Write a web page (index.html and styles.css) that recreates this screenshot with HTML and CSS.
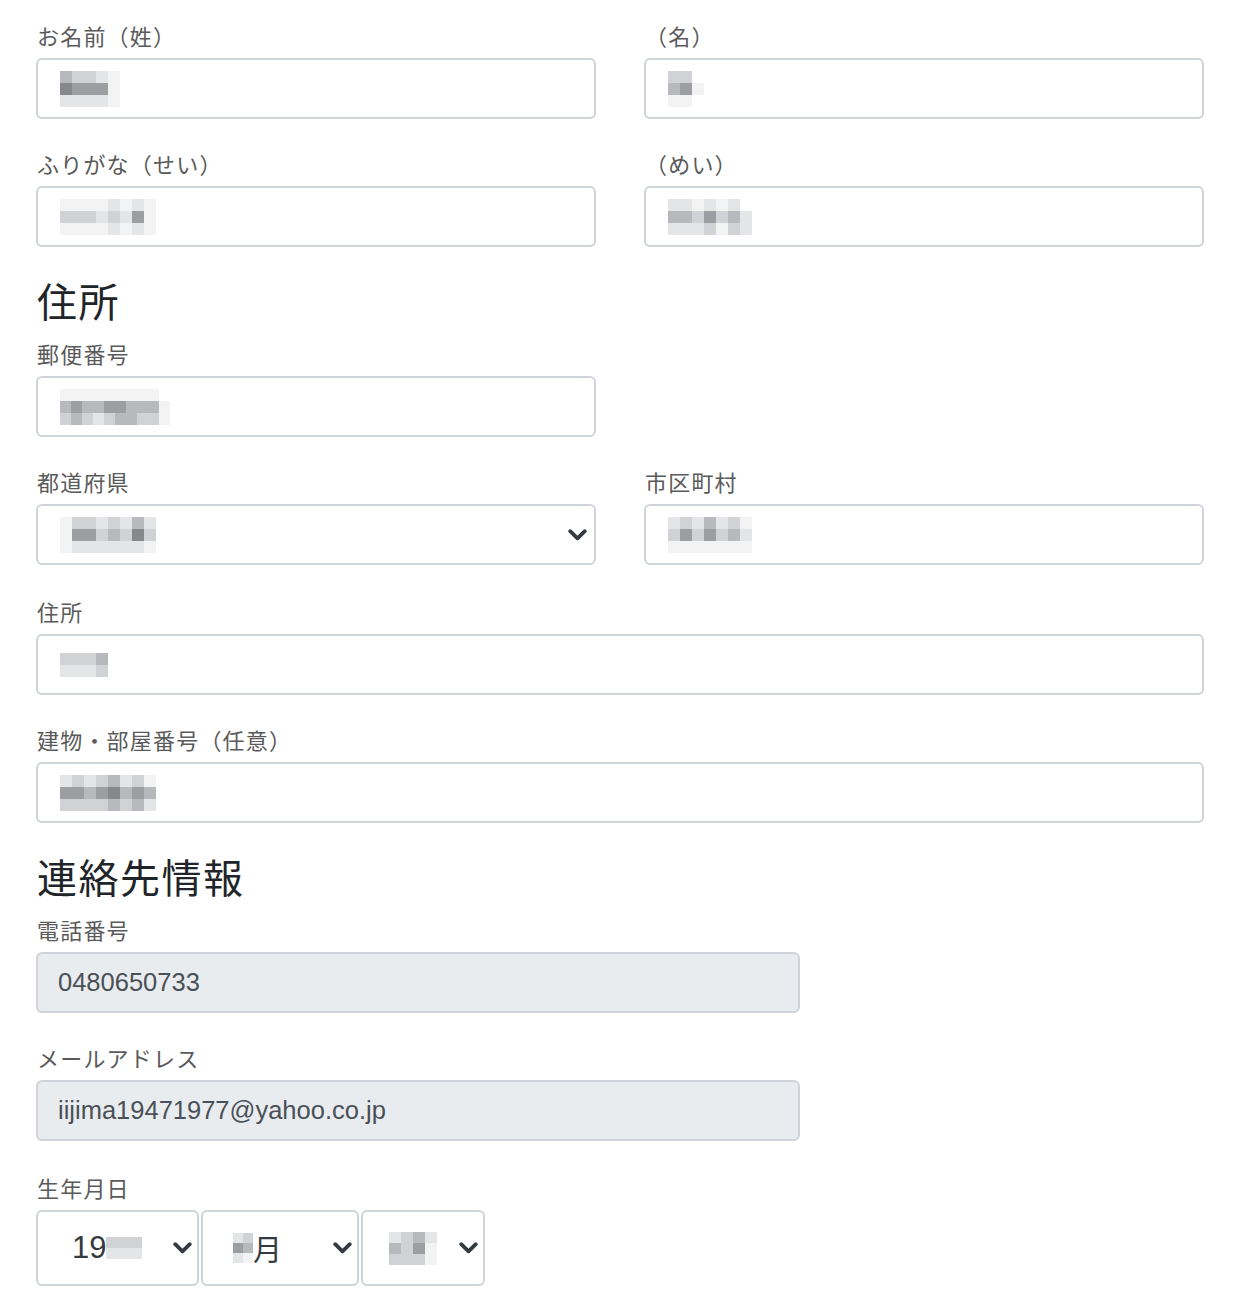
FILE: index.html
```html
<!DOCTYPE html>
<html lang="ja">
<head>
<meta charset="utf-8">
<title>会員情報</title>
<link rel="stylesheet" href="styles.css">
</head>
<body>
<main class="form">

  <div class="row">
    <div class="field">
      <label class="label">お名前（姓）</label>
      <div class="control">
        <span class="mosaic cols-5"><i class="s3"></i><i class="s2"></i><i class="s2"></i><i class="s1"></i><i class="s0"></i><i class="s5"></i><i class="s4"></i><i class="s4"></i><i class="s4"></i><i class="s0"></i><i class="s1"></i><i class="s1"></i><i class="s1"></i><i class="s1"></i><i class="s0"></i></span>
      </div>
    </div>
    <div class="field">
      <label class="label">（名）</label>
      <div class="control">
        <span class="mosaic cols-3"><i class="s2"></i><i class="s2"></i><i class="n"></i><i class="s3"></i><i class="s4"></i><i class="s0"></i><i class="s0"></i><i class="s0"></i><i class="n"></i></span>
      </div>
    </div>
  </div>

  <div class="row">
    <div class="field">
      <label class="label">ふりがな（せい）</label>
      <div class="control">
        <span class="mosaic cols-9"><i class="s0"></i><i class="s0"></i><i class="s0"></i><i class="s0"></i><i class="s1"></i><i class="s0"></i><i class="s1"></i><i class="s0"></i><i class="n"></i><i class="s2"></i><i class="s2"></i><i class="s2"></i><i class="s1"></i><i class="s2"></i><i class="s1"></i><i class="s4"></i><i class="s0"></i><i class="n"></i><i class="s0"></i><i class="s0"></i><i class="s0"></i><i class="s0"></i><i class="s1"></i><i class="s0"></i><i class="s1"></i><i class="s0"></i><i class="n"></i></span>
      </div>
    </div>
    <div class="field">
      <label class="label">（めい）</label>
      <div class="control">
        <span class="mosaic cols-7"><i class="s1"></i><i class="s1"></i><i class="s0"></i><i class="s1"></i><i class="s0"></i><i class="s1"></i><i class="n"></i><i class="s3"></i><i class="s3"></i><i class="s2"></i><i class="s4"></i><i class="s2"></i><i class="s3"></i><i class="s1"></i><i class="s1"></i><i class="s1"></i><i class="s1"></i><i class="s2"></i><i class="s0"></i><i class="s2"></i><i class="s1"></i></span>
      </div>
    </div>
  </div>

  <h2 class="section-title">住所</h2>

  <div class="row">
    <div class="field">
      <label class="label">郵便番号</label>
      <div class="control">
        <span class="mosaic cols-10"><i class="s0"></i><i class="s0"></i><i class="s0"></i><i class="s0"></i><i class="s0"></i><i class="s0"></i><i class="s0"></i><i class="s0"></i><i class="s0"></i><i class="n"></i><i class="s3"></i><i class="s4"></i><i class="s3"></i><i class="s3"></i><i class="s4"></i><i class="s4"></i><i class="s3"></i><i class="s3"></i><i class="s3"></i><i class="s0"></i><i class="s2"></i><i class="s3"></i><i class="s2"></i><i class="s1"></i><i class="s2"></i><i class="s3"></i><i class="s3"></i><i class="s2"></i><i class="s2"></i><i class="s0"></i></span>
      </div>
    </div>
  </div>

  <div class="row gap-lg">
    <div class="field">
      <label class="label">都道府県</label>
      <div class="control select">
        <span class="mosaic cols-8"><i class="s0"></i><i class="s2"></i><i class="s2"></i><i class="s1"></i><i class="s2"></i><i class="s1"></i><i class="s3"></i><i class="s1"></i><i class="s0"></i><i class="s4"></i><i class="s4"></i><i class="s2"></i><i class="s3"></i><i class="s2"></i><i class="s5"></i><i class="s2"></i><i class="s0"></i><i class="s1"></i><i class="s1"></i><i class="s1"></i><i class="s1"></i><i class="s1"></i><i class="s1"></i><i class="s0"></i></span>
        <svg class="chevron" viewBox="0 0 19 12" width="19" height="12" aria-hidden="true"><path d="M2.2 2.2 L9.5 9.3 L16.8 2.2" fill="none" stroke="#343a40" stroke-width="3.8" stroke-linecap="round" stroke-linejoin="round"/></svg>
      </div>
    </div>
    <div class="field">
      <label class="label">市区町村</label>
      <div class="control">
        <span class="mosaic cols-7"><i class="s1"></i><i class="s2"></i><i class="s1"></i><i class="s3"></i><i class="s1"></i><i class="s2"></i><i class="s0"></i><i class="s2"></i><i class="s4"></i><i class="s2"></i><i class="s4"></i><i class="s2"></i><i class="s3"></i><i class="s1"></i><i class="s0"></i><i class="s0"></i><i class="s0"></i><i class="s0"></i><i class="s0"></i><i class="s0"></i><i class="s0"></i></span>
      </div>
    </div>
  </div>

  <div class="row single">
    <div class="field">
      <label class="label">住所</label>
      <div class="control">
        <span class="mosaic cols-4"><i class="s2"></i><i class="s2"></i><i class="s2"></i><i class="s3"></i><i class="s1"></i><i class="s1"></i><i class="s1"></i><i class="s2"></i></span>
      </div>
    </div>
  </div>

  <div class="row single">
    <div class="field">
      <label class="label">建物・部屋番号（任意）</label>
      <div class="control">
        <span class="mosaic cols-8"><i class="s1"></i><i class="s2"></i><i class="s1"></i><i class="s2"></i><i class="s3"></i><i class="s1"></i><i class="s2"></i><i class="s0"></i><i class="s4"></i><i class="s4"></i><i class="s3"></i><i class="s4"></i><i class="s5"></i><i class="s3"></i><i class="s4"></i><i class="s3"></i><i class="s2"></i><i class="s2"></i><i class="s2"></i><i class="s2"></i><i class="s3"></i><i class="s2"></i><i class="s3"></i><i class="s1"></i></span>
      </div>
    </div>
  </div>

  <h2 class="section-title">連絡先情報</h2>

  <div class="row narrow">
    <div class="field">
      <label class="label">電話番号</label>
      <div class="control disabled">0480650733</div>
    </div>
  </div>

  <div class="row narrow gap-lg">
    <div class="field">
      <label class="label">メールアドレス</label>
      <div class="control disabled">iijima19471977@yahoo.co.jp</div>
    </div>
  </div>

  <div class="row narrow">
    <div class="field">
      <label class="label">生年月日</label>
      <div class="date-row">
        <div class="date-select year">
          <span class="date-value">19<span class="mosaic cols-3 small"><i class="s2"></i><i class="s2"></i><i class="s2"></i><i class="s1"></i><i class="s1"></i><i class="s1"></i></span></span>
          <svg class="chevron" viewBox="0 0 19 12" width="19" height="12" aria-hidden="true"><path d="M2.2 2.2 L9.5 9.3 L16.8 2.2" fill="none" stroke="#343a40" stroke-width="3.8" stroke-linecap="round" stroke-linejoin="round"/></svg>
        </div>
        <div class="date-select month">
          <span class="date-value"><span class="mosaic cols-2 tiny"><i class="s1"></i><i class="s2"></i><i class="s4"></i><i class="s3"></i><i class="s1"></i><i class="s0"></i></span>月</span>
          <svg class="chevron" viewBox="0 0 19 12" width="19" height="12" aria-hidden="true"><path d="M2.2 2.2 L9.5 9.3 L16.8 2.2" fill="none" stroke="#343a40" stroke-width="3.8" stroke-linecap="round" stroke-linejoin="round"/></svg>
        </div>
        <div class="date-select day">
          <span class="date-value"><span class="mosaic cols-4 small"><i class="s1"></i><i class="s2"></i><i class="s3"></i><i class="s1"></i><i class="s3"></i><i class="s2"></i><i class="s4"></i><i class="s0"></i><i class="s2"></i><i class="s2"></i><i class="s2"></i><i class="s0"></i></span></span>
          <svg class="chevron" viewBox="0 0 19 12" width="19" height="12" aria-hidden="true"><path d="M2.2 2.2 L9.5 9.3 L16.8 2.2" fill="none" stroke="#343a40" stroke-width="3.8" stroke-linecap="round" stroke-linejoin="round"/></svg>
        </div>
      </div>
    </div>
  </div>

</main>
</body>
</html>
```

FILE: styles.css
```css
* {
  box-sizing: border-box;
}

body {
  margin: 0;
  background: #ffffff;
  font-family: "Noto Sans CJK JP", "Liberation Sans", sans-serif;
  color: #212529;
}

.form {
  width: 1168px;
  margin-left: 36px;
  padding-top: 20px;
}

.row {
  display: grid;
  grid-template-columns: 560px 560px;
  column-gap: 48px;
  margin-bottom: 29px;
}

.row.gap-lg {
  margin-bottom: 31px;
}

.row.single {
  grid-template-columns: 1168px;
}

.row.narrow {
  grid-template-columns: 764px;
}

.field {
  display: flex;
  flex-direction: column;
}

.label {
  display: block;
  font-size: 22px;
  line-height: 30px;
  margin-bottom: 8px;
  padding-left: 1px;
  letter-spacing: 1.2px;
  color: #5a5a5a;
  font-weight: 400;
}

.section-title {
  margin: 0 0 14px;
  padding-left: 1px;
  font-size: 40px;
  line-height: 48px;
  letter-spacing: 1.5px;
  font-weight: 400;
  color: #212529;
}

.control {
  height: 61px;
  border: 2px solid #ced4da;
  border-radius: 6px;
  background: #ffffff;
  display: flex;
  align-items: center;
  padding: 0 20px 0 22px;
  font-family: "Liberation Sans", "Noto Sans CJK JP", sans-serif;
  font-size: 25.5px;
  color: #495057;
}

.control.disabled {
  background: #e9ecef;
  padding-left: 20px;
}

.control.select {
  justify-content: space-between;
  padding-right: 7px;
}

.chevron {
  display: block;
  flex: none;
}

.mosaic {
  display: inline-grid;
  grid-auto-rows: 12px;
  vertical-align: middle;
}

.mosaic i {
  display: block;
}

.cols-2 { grid-template-columns: repeat(2, 12px); }
.cols-3 { grid-template-columns: repeat(3, 12px); }
.cols-4 { grid-template-columns: repeat(4, 12px); }
.cols-5 { grid-template-columns: repeat(5, 12px); }
.cols-7 { grid-template-columns: repeat(7, 12px); }
.cols-8 { grid-template-columns: repeat(8, 12px); }
.cols-9 { grid-template-columns: repeat(9, 12px); }
.cols-10 { grid-template-columns: repeat(10, 11px); }

.mosaic.small {
  grid-auto-rows: 11px;
}

.mosaic.tiny {
  grid-template-columns: repeat(2, 10px);
  grid-auto-rows: 10px;
}

.s0 { background: #f3f3f4; }
.s1 { background: #e4e5e7; }
.s2 { background: #d1d2d5; }
.s3 { background: #b8b9bd; }
.s4 { background: #9c9ea2; }
.s5 { background: #86888c; }
.n { background: transparent; }

.date-row {
  display: flex;
  gap: 2px;
}

.date-select {
  height: 76px;
  border: 2px solid #ced4da;
  border-radius: 6px;
  display: flex;
  align-items: center;
  justify-content: space-between;
  padding-right: 5px;
  font-family: "Liberation Sans", "Noto Sans CJK JP", sans-serif;
  font-size: 31px;
  color: #343a40;
}

.date-value {
  display: inline-flex;
  align-items: center;
}

.date-select.year {
  width: 163px;
  padding-left: 34px;
}

.date-select.month {
  width: 158px;
  padding-left: 30px;
}

.date-select.day {
  width: 124px;
  padding-left: 26px;
}

.date-select.month .date-value {
  font-family: "Noto Sans CJK JP", sans-serif;
  font-size: 29px;
}
```
